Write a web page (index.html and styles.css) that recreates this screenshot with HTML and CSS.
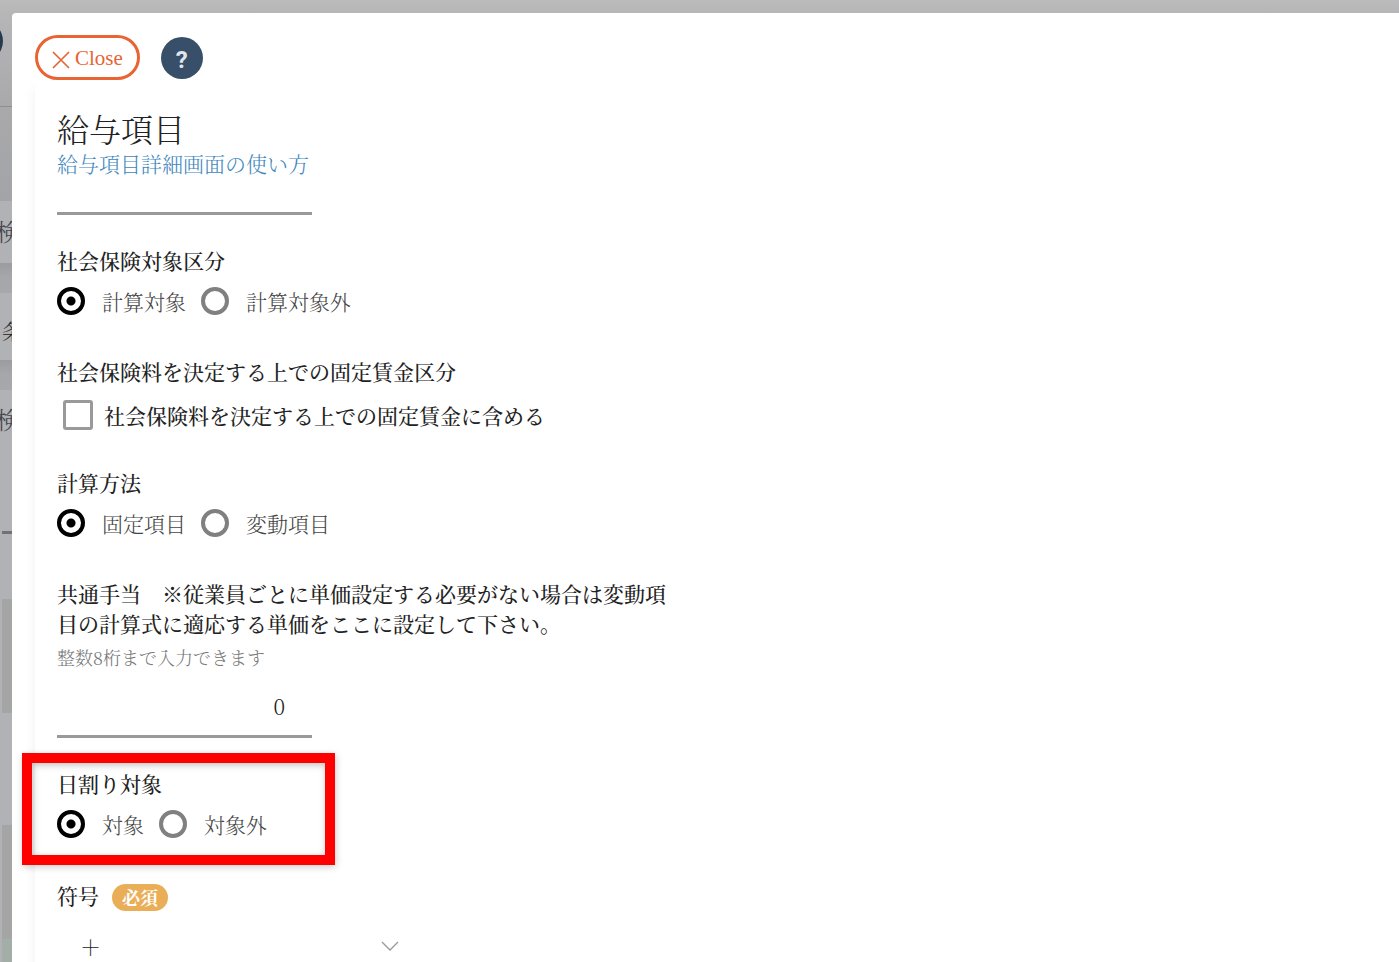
FILE: index.html
```
<!DOCTYPE html>
<html lang="ja">
<head>
    <meta charset="UTF-8">
    <title>給与項目</title>
    <link rel="stylesheet" href="styles.css">
</head>
<body>
    <!-- page behind the dialog -->
    <div class="page" aria-hidden="true">
        <div class="page-header"><span class="page-help"></span></div>
        <div class="page-space"></div>
        <div class="page-card search">検</div>
        <div class="page-gap"></div>
        <div class="page-card condition">条</div>
        <div class="page-gap"></div>
        <div class="page-card results">
            <div class="results-title">検</div>
            <div class="cell line"></div>
            <div class="cell grey"></div>
            <div class="cell"></div>
            <div class="cell grey"></div>
            <div class="cell green"></div>
        </div>
    </div>

    <main class="modal" role="dialog" aria-labelledby="title">
        <div class="toolbar">
            <button type="button" class="close-btn">
                <svg width="18" height="18" viewBox="0 0 18 18" aria-hidden="true">
                    <path d="M1 1 L17 17 M17 1 L1 17" fill="none" stroke="currentColor" stroke-width="1.7"/>
                </svg>
                Close
            </button>
            <button type="button" class="help-btn">?</button>
        </div>

        <form class="card">
            <h1 id="title">給与項目</h1>
            <a href="#" class="guide">給与項目詳細画面の使い方</a>

            <input type="text" class="text-field name-field" aria-label="給与項目">

            <fieldset class="group">
                <legend>社会保険対象区分</legend>
                <div class="choices">
                    <label><input type="radio" name="insurance" checked>計算対象</label>
                    <label><input type="radio" name="insurance">計算対象外</label>
                </div>
            </fieldset>

            <fieldset class="group check-group">
                <legend>社会保険料を決定する上での固定賃金区分</legend>
                <label class="check"><input type="checkbox" name="fixed">社会保険料を決定する上での固定賃金に含める</label>
            </fieldset>

            <fieldset class="group">
                <legend>計算方法</legend>
                <div class="choices">
                    <label><input type="radio" name="method" checked>固定項目</label>
                    <label><input type="radio" name="method">変動項目</label>
                </div>
            </fieldset>

            <div class="group field-group">
                <label class="heading" for="common">共通手当　※従業員ごとに単価設定する必要がない場合は変動項目の計算式に適応する単価をここに設定して下さい。</label>
                <small class="hint">整数8桁まで入力できます</small>
                <input type="text" id="common" class="text-field number" value="0">
            </div>

            <div class="marked">
                <fieldset class="group">
                    <legend>日割り対象</legend>
                    <div class="choices">
                        <label><input type="radio" name="daily" checked>対象</label>
                        <label><input type="radio" name="daily">対象外</label>
                    </div>
                </fieldset>
                <div class="mark"></div>
            </div>

            <div class="group">
                <div class="heading-row">
                    <label class="heading" for="sign">符号</label>
                    <span class="badge">必須</span>
                </div>
                <div class="select-wrap">
                    <select id="sign">
                        <option>＋</option>
                        <option>－</option>
                    </select>
                    <svg class="chevron" width="18" height="10" viewBox="0 0 18 10" aria-hidden="true">
                        <path d="M1 1 L9 9 L17 1" fill="none" stroke="#999" stroke-width="1.3"/>
                    </svg>
                </div>
            </div>
        </form>
    </main>
</body>
</html>
```
FILE: styles.css
```
* {
    box-sizing: border-box;
}
body {
    margin: 0;
    height: 100vh;
    overflow: hidden;
    font-family: "Noto Serif CJK JP", "Liberation Serif", "Noto Sans CJK JP", serif;
    font-size: 21px;
    font-weight: 300;
    line-height: 30px;
    color: #222;
}
button, input, select {
    font: inherit;
    color: inherit;
}

/* dimmed page */
.page {
    height: 100%;
    overflow: hidden;
    background: #b9b9bb;
    color: #45464c;
}
.page-header {
    height: 107px;
    padding-top: 20px;
    border-bottom: 1px solid #8e8e90;
    background: linear-gradient(#bbb, #b6b6b8 14px, #a9a9ac);
}
.page-help {
    display: block;
    width: 42px;
    height: 42px;
    margin-left: -39px;
    border-radius: 50%;
    background: #273a50;
}
.page-space {
    height: 94px;
    background: linear-gradient(#a9a9ab, #a3a4a8);
}
.page-gap {
    height: 30px;
    background: linear-gradient(#9b9ca0, #a6a7ab 14px, #a7a8ac);
}
.page-card {
    background: #b1b2b6;
}
.search {
    height: 62px;
    padding-top: 15px;
    font-size: 24px;
    text-indent: -4px;
}
.condition {
    height: 67px;
    padding-top: 22px;
    text-indent: 2px;
    color: #222;
}
.results-title {
    height: 141px;
    padding-top: 14px;
    font-size: 24px;
    text-indent: -4px;
}
.cell {
    height: 112px;
    margin-left: 2px;
}
.cell.line {
    height: 68px;
    border-top: 3px solid #717276;
}
.cell.grey {
    height: 114px;
    background: #a5a5a6;
}
.cell.green {
    background: #a4aea8;
}

/* dialog */
.modal {
    position: fixed;
    inset: 13px 0 0 12px;
    padding: 22px 0 0 23px;
    overflow: hidden;
    border-top-left-radius: 4px;
    background: #fff;
}
.toolbar {
    display: flex;
    align-items: center;
    gap: 21px;
}
.close-btn {
    display: flex;
    align-items: center;
    gap: 5px;
    height: 45px;
    padding: 0 14px;
    border: 3px solid #e86433;
    border-radius: 23px;
    background: #fff;
    color: #e86433;
    font-family: "Liberation Serif", serif;
    cursor: pointer;
}
.close-btn svg {
    margin-top: 4px;
}
.help-btn {
    width: 42px;
    height: 42px;
    padding: 4px 0 0;
    border: 0;
    border-radius: 50%;
    background: #374f69;
    color: #e0e6ec;
    font-family: Roboto, sans-serif;
    font-size: 24px;
    font-weight: 700;
    cursor: pointer;
}
.card {
    padding: 29px 22px;
    background: #fff;
    box-shadow: 0 8px 12px rgba(0, 0, 0, 0.06);
}
h1 {
    margin: 0;
    font-size: 32px;
    font-weight: 300;
    line-height: 39px;
}
.guide {
    display: block;
    margin-bottom: 2px;
    color: #3f87bd;
    text-decoration: none;
}
.text-field {
    display: block;
    width: 255px;
    height: 66px;
    padding: 5px 27px 0;
    border: 0;
    border-bottom: 3px solid #999;
    border-radius: 0;
    background: transparent;
}
.name-field {
    height: 35px;
    margin-bottom: 30px;
}
.number {
    text-align: right;
}
.group {
    min-width: 0;
    margin: 0 0 40px;
    padding: 0;
    border: 0;
}
.check-group {
    margin-bottom: 37px;
}
.field-group {
    margin-bottom: 30px;
}
legend, .heading {
    display: block;
    max-width: 620px;
    padding: 0;
    font-weight: 500;
}
.choices {
    display: flex;
    gap: 15px;
    margin-top: 11px;
}
.choices label, .check {
    display: flex;
    align-items: center;
}
.choices label {
    gap: 17px;
    color: #444;
}
input[type="radio"] {
    appearance: none;
    width: 28px;
    height: 28px;
    margin: 0;
    border: 4px solid #808080;
    border-radius: 50%;
}
input[type="radio"]:checked {
    border-color: #000;
    background: radial-gradient(circle, #000 4px, #fff 5px);
}
.check {
    gap: 11px;
    margin-top: 14px;
    padding-left: 6px;
    font-weight: 500;
}
input[type="checkbox"] {
    appearance: none;
    width: 30px;
    height: 30px;
    margin: 0;
    border: 3px solid #999;
    border-radius: 3px;
}
.hint {
    display: block;
    margin-top: 4px;
    font-size: 18px;
    color: #777;
}

/* red frame around the highlighted group */
.marked {
    position: relative;
    width: 255px;
}
.mark {
    position: absolute;
    inset: -15px -23px -26px -35px;
    border: 10px solid #f00;
    box-shadow: 1px 2px 7px rgba(0, 0, 0, 0.2), inset 1px 2px 7px rgba(0, 0, 0, 0.25);
    pointer-events: none;
}
.marked .group {
    margin: 0;
}
.marked + .group {
    margin-top: 41px;
}
.heading-row {
    display: flex;
    align-items: flex-start;
    gap: 13px;
}
.badge {
    margin-top: 4px;
    padding: 0 10px;
    border-radius: 14px;
    background: #ebae58;
    color: #fff;
    font-size: 18px;
    font-weight: 700;
    line-height: 27px;
}
.select-wrap {
    display: grid;
    align-items: center;
    width: 370px;
    margin-top: 4px;
}
.select-wrap > * {
    grid-area: 1 / 1;
}
select {
    width: 100%;
    height: 62px;
    padding: 0 23px;
    border: 0;
    appearance: none;
    background: transparent;
}
.chevron {
    justify-self: end;
    margin-right: 28px;
    pointer-events: none;
}
```
